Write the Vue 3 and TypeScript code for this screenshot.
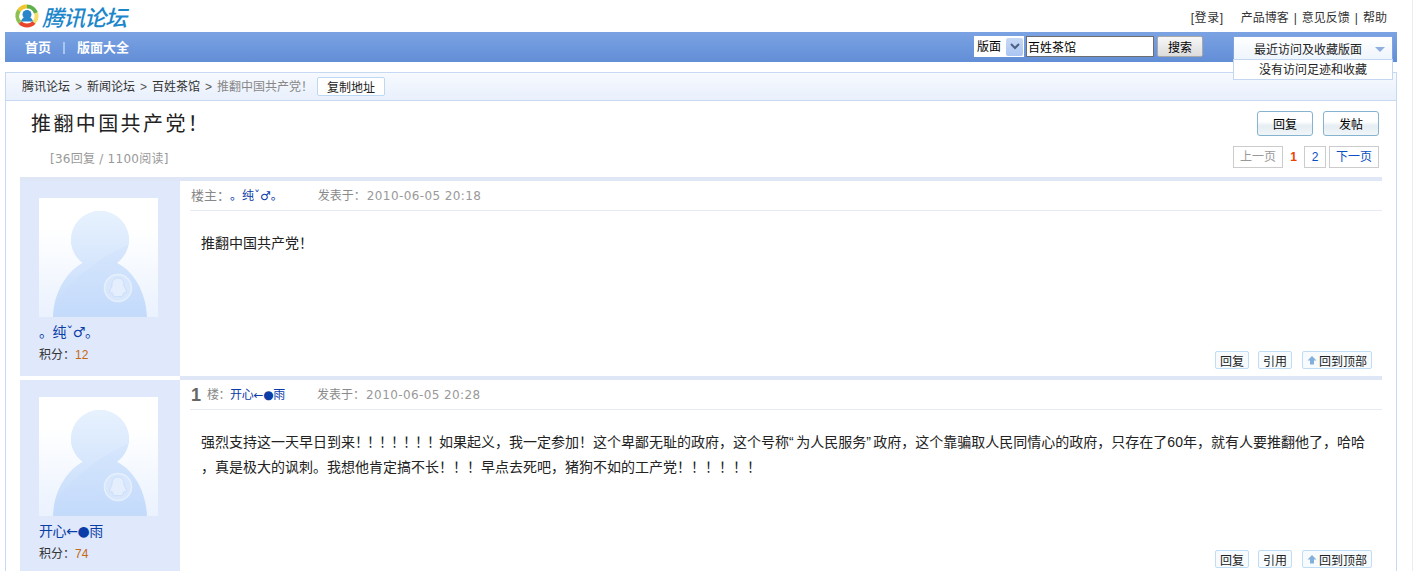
<script setup lang="ts">
import { ref } from 'vue'

interface Segment {
  text: string
  kind?: 'tight' | 'quote'
}

interface Post {
  floor: number
  author: string
  score: number
  time: string
  lines: Segment[][]
}

const board = ref('百姓茶馆')

const posts: Post[] = [
  {
    floor: 0,
    author: '。纯ˇ♂。',
    score: 12,
    time: '2010-06-05 20:18',
    lines: [[{ text: '推翻中国共产党！' }]]
  },
  {
    floor: 1,
    author: '开心←●雨',
    score: 74,
    time: '2010-06-05 20:28',
    lines: [
      [
        { text: '强烈支持这一天早日到来' },
        { text: '！！！！！！！', kind: 'tight' },
        { text: '如果起义，我一定参加！这个卑鄙无耻的政府，这个号称' },
        { text: '“', kind: 'quote' },
        { text: '为人民服务' },
        { text: '”', kind: 'quote' },
        { text: '政府，这个靠骗取人民同情心的政府，只存在了60年，就有人要推翻他了，哈哈' }
      ],
      [{ text: '，真是极大的讽刺。我想他肯定搞不长！！！早点去死吧，猪狗不如的工产党！！！！！！' }]
    ]
  }
]
</script>

<template>
  <div class="page">
    <header class="top">
      <a class="logo">
        <svg width="24" height="24" viewBox="0 0 24 24">
          <circle cx="12" cy="12" r="9.500" fill="#fff" />
          <path d="M4 6.500A9.500 9.500 0 0 1 12 2.500" fill="none" stroke="#f2c62e" stroke-width="4" />
          <path d="M12 2.500A9.500 9.500 0 0 1 21 9" fill="none" stroke="#5fb04a" stroke-width="4" />
          <path d="M21 9A9.500 9.500 0 0 1 19 18.500" fill="none" stroke="#f4df6a" stroke-width="4" />
          <path d="M19 18.500A9.500 9.500 0 0 1 5 18.500" fill="none" stroke="#e8452c" stroke-width="4" />
          <path d="M5 18.500A9.500 9.500 0 0 1 4 6.500" fill="none" stroke="#8cc152" stroke-width="4" />
          <circle cx="12" cy="10.500" r="4.500" fill="#2a86c8" />
          <path d="M6 17.500c1-3.500 3-4.500 6-4.500s5 1 6 4.500z" fill="#2a86c8" />
        </svg>
        <span class="logo-text">腾讯论坛</span>
      </a>
      <nav class="top-nav">
        <span class="login">[登录]</span>
        <span>产品博客</span><i>|</i><span>意见反馈</span><i>|</i><span>帮助</span>
      </nav>
    </header>

    <div class="bar">
      <div class="bar-links">
        <a>首页</a>
        <i></i>
        <a>版面大全</a>
      </div>
      <div class="search">
        <div class="select">
          <span>版面</span>
          <b>
            <svg width="10" height="7" viewBox="0 0 10 7"><path d="M1 1l4 4 4-4" fill="none" stroke="#4d6185" stroke-width="2" /></svg>
          </b>
        </div>
        <input v-model="board" class="keyword" type="text" />
        <button class="search-btn" type="button">搜索</button>
      </div>
    </div>

    <div class="recent">
      <div class="recent-head">
        <span>最近访问及收藏版面</span>
        <em></em>
      </div>
      <div class="recent-body">没有访问足迹和收藏</div>
    </div>

    <main class="box">
      <div class="crumbs">
        <span>腾讯论坛</span><u>&gt;</u><span>新闻论坛</span><u>&gt;</u><span>百姓茶馆</span><u>&gt;</u>
        <span class="current">推翻中国共产党！</span>
        <button class="copy" type="button">复制地址</button>
      </div>

      <div class="title-row">
        <h1>推翻中国共产党！</h1>
        <div class="actions">
          <button type="button">回复</button>
          <button type="button">发帖</button>
        </div>
      </div>

      <div class="meta-row">
        <span class="counts">[36回复 / 1100阅读]</span>
        <div class="pager">
          <span class="page-btn off">上一页</span>
          <span class="now">1</span>
          <span class="page-btn num">2</span>
          <span class="page-btn">下一页</span>
        </div>
      </div>

      <div class="posts">
        <article v-for="post in posts" :key="post.floor" class="post">
          <aside class="side">
            <svg class="avatar" width="120" height="120" viewBox="0 0 120 120">
              <defs>
                <linearGradient :id="`bg${post.floor}`" x1="0" y1="0" x2="0" y2="1">
                  <stop offset="0.25" stop-color="#ffffff" />
                  <stop offset="1" stop-color="#eaf2fe" />
                </linearGradient>
                <linearGradient :id="`fig${post.floor}`" x1="0" y1="0" x2="0" y2="1">
                  <stop offset="0.3" stop-color="#d9e8fd" />
                  <stop offset="1" stop-color="#c3dafb" />
                </linearGradient>
                <linearGradient :id="`hi${post.floor}`" x1="0" y1="0" x2="0" y2="1">
                  <stop offset="0.1" stop-color="#e8f2fe" />
                  <stop offset="0.9" stop-color="#c8ddfb" />
                </linearGradient>
                <clipPath :id="`clip${post.floor}`">
                  <path d="M14 119C15 92 30 72 44 65 36 59 32 50 32 42a29 29 0 0 1 58 0c0 8-4 17-12 23 15 7 29 27 30 54z" />
                </clipPath>
              </defs>
              <rect width="119" height="119" :fill="`url(#bg${post.floor})`" />
              <g :clip-path="`url(#clip${post.floor})`">
                <rect width="120" height="120" :fill="`url(#fig${post.floor})`" />
                <path d="M0 0h120v36C88 44 42 66 14 108L0 119z" :fill="`url(#hi${post.floor})`" />
              </g>
              <circle cx="79" cy="90" r="13.500" fill="#d8e7fc" stroke="#e6f0fd" stroke-width="1.500" />
              <path d="M79 80c-4.500 0-6 3.500-6 7 0 2-2.500 4.500-2.500 7 0 1.500 1 1.500 2.500.5 .2 1 .6 1.800 1.500 2.200-1 .8-.5 2 1 2h7c1.500 0 2-1.200 1-2 .9-.4 1.300-1.200 1.500-2.200 1.500 1 2.500 1 2.500-.5 0-2.500-2.500-5-2.500-7 0-3.500-1.500-7-6-7z" fill="#e4eefd" stroke="#c5d9f7" stroke-width="0.800" />
            </svg>
            <a class="author">{{ post.author }}</a>
            <div class="score">积分：<span>{{ post.score }}</span></div>
          </aside>

          <section class="content">
            <div class="post-head">
              <template v-if="post.floor === 0">
                <span class="role">楼主：</span><a class="name">{{ post.author }}</a>
              </template>
              <template v-else>
                <strong>{{ post.floor }}</strong>
                <span class="role small">楼：</span><a class="name small">{{ post.author }}</a>
              </template>
              <span class="time">发表于：<span class="stamp">{{ post.time }}</span></span>
            </div>
            <div class="post-body">
              <p v-for="(line, i) in post.lines" :key="i">
                <span v-for="seg in line" :key="seg.text" :class="seg.kind">{{ seg.text }}</span>
              </p>
            </div>
            <div class="post-foot">
              <button type="button">回复</button>
              <button type="button">引用</button>
              <button type="button" class="to-top">
                <svg width="10" height="10" viewBox="0 0 10 10"><path d="M5 1l4.500 4.500H7V9.500H3V5.500H.5z" fill="#82b0da" /></svg>
                回到顶部
              </button>
            </div>
          </section>
        </article>
      </div>
    </main>
  </div>
</template>

<style>
html,
body {
  margin: 0;
  height: 100%;
  overflow: hidden;
  background: #fff;
}

body {
  box-sizing: border-box;
  border-right: 1px solid #ececec;
}
</style>

<style scoped>
.page {
  position: relative;
  width: 1392px;
  margin-left: 5px;
  font: 12px/16px "Liberation Sans", "Noto Sans CJK SC", sans-serif;
  color: #222;
}

.top {
  display: flex;
  align-items: flex-start;
  justify-content: space-between;
  height: 32px;
}

.logo {
  display: flex;
  align-items: center;
  gap: 3px;
  margin: 3px 0 0 10px;
}

.logo-text {
  font: italic 500 22px/26px "Noto Sans CJK SC", sans-serif;
  letter-spacing: -1px;
  color: #1c86cb;
}

.top-nav {
  display: flex;
  gap: 5px;
  margin: 10px 10px 0 0;
  color: #333;
}

.top-nav i {
  font-style: normal;
}

.login {
  margin-right: 12px;
  letter-spacing: 0.6px;
}

.bar {
  display: flex;
  align-items: flex-start;
  justify-content: space-between;
  height: 30px;
  background: linear-gradient(#7ba3e3, #628ed7);
  box-sizing: border-box;
}

.bar-links {
  display: flex;
  align-items: center;
  height: 30px;
  padding: 1px 0 0 20px;
  box-sizing: border-box;
  color: #fff;
  font-size: 13px;
  font-weight: 700;
}

.bar-links i {
  width: 2px;
  height: 12px;
  margin: 0 12px;
  background: #a9c6f0;
}

.search {
  display: flex;
  align-items: center;
  margin: 4px 194px 0 0;
}

.select {
  display: flex;
  align-items: center;
  justify-content: space-between;
  width: 50px;
  height: 21px;
  margin-right: 2px;
  box-sizing: border-box;
  padding: 1px;
  background: #fff;
  color: #000;
  font-size: 12px;
}

.select span {
  padding-left: 2px;
}

.select b {
  display: flex;
  align-items: center;
  justify-content: center;
  width: 17px;
  height: 18px;
  border-radius: 2px;
  background: linear-gradient(#c8d9f6, #aac5f2);
}

.keyword {
  width: 128px;
  height: 21px;
  box-sizing: border-box;
  padding: 0 1px;
  border: 1px solid #6e6e6e;
  background: #fff;
  font: 12px "Liberation Sans", "Noto Sans CJK SC", sans-serif;
  color: #000;
  outline: none;
}

.search-btn {
  width: 46px;
  height: 21px;
  margin-left: 3px;
  padding: 0;
  border: 1px solid #a9a9a9;
  border-radius: 2px;
  background: linear-gradient(#f7f7f7, #dcdcdc);
  font: 12px "Liberation Sans", "Noto Sans CJK SC", sans-serif;
  color: #000;
}

.recent {
  position: absolute;
  top: 36px;
  left: 1228px;
  width: 160px;
  z-index: 2;
  font-size: 12px;
  color: #222;
}

.recent-head {
  display: flex;
  align-items: center;
  justify-content: space-between;
  height: 23px;
  box-sizing: border-box;
  padding: 3px 7px 0 20px;
  border: 1px solid #7ea3e0;
  border-bottom: 0;
  background: linear-gradient(#fff, #eef5fc);
}

.recent-head em {
  width: 0;
  height: 0;
  border: 5px solid transparent;
  border-top: 5px solid #8fb0df;
  border-bottom: 0;
}

.recent-body {
  height: 21px;
  box-sizing: border-box;
  padding-top: 2px;
  border: 1px solid #c4d6f0;
  background: #fff;
  text-align: center;
}

.box {
  margin-top: 10px;
  border: 1px solid #c7d9f2;
  border-bottom: 0;
}

.crumbs {
  display: flex;
  align-items: center;
  height: 27px;
  padding-left: 16px;
  border-bottom: 1px solid #c7d9f2;
  background: linear-gradient(#f6f9fe, #e9f0fc);
  color: #333;
}

.crumbs u {
  margin: 0 5px;
  text-decoration: none;
  color: #555;
}

.current {
  color: #888;
}

.copy {
  width: 68px;
  height: 19px;
  margin-left: 4px;
  padding: 0;
  border: 1px solid #bcd8f5;
  border-radius: 2px;
  background: #fff;
  font: 12px "Liberation Sans", "Noto Sans CJK SC", sans-serif;
  color: #222;
}

.title-row {
  display: flex;
  align-items: flex-start;
  justify-content: space-between;
  height: 42px;
  padding: 10px 17px 0 25px;
  box-sizing: border-box;
}

h1 {
  margin: 0;
  font-size: 20px;
  line-height: 26px;
  font-weight: 400;
  letter-spacing: 2.4px;
  color: #222;
}

.actions {
  display: flex;
  gap: 10px;
}

.actions button {
  width: 56px;
  height: 25px;
  padding: 0;
  border: 1px solid #86b3cf;
  border-radius: 3px;
  background: linear-gradient(#fff 40%, #e6eef3 60%, #f0f5f8);
  font: 12px "Liberation Sans", "Noto Sans CJK SC", sans-serif;
  color: #000;
}

.meta-row {
  display: flex;
  align-items: flex-start;
  justify-content: space-between;
  height: 34px;
  padding: 3px 17px 0 44px;
  box-sizing: border-box;
}

.counts {
  padding-top: 5px;
  font-family: "DejaVu Sans", "Noto Sans CJK SC", sans-serif;
  letter-spacing: 0.25px;
  color: #999;
}

.pager {
  display: flex;
  align-items: center;
  color: #0b4fc0;
}

.page-btn {
  display: block;
  width: 50px;
  height: 22px;
  box-sizing: border-box;
  border: 1px solid #ccc;
  line-height: 20px;
  text-align: center;
}

.page-btn.off {
  color: #999;
}

.page-btn.num {
  width: 22px;
  margin-right: 3px;
}

.now {
  width: 21px;
  text-align: center;
  color: #f04000;
  font-weight: 700;
}

.posts {
  margin: 0 14px;
}

.post {
  display: flex;
  height: 199px;
}

.side {
  width: 160px;
  height: 199px;
  padding: 17px 0 0 19px;
  box-sizing: border-box;
  border-top: 4px solid #dfe7f7;
  background: #e0e9fb;
  flex-shrink: 0;
}

.post + .post .side {
  border-top-color: #fff;
}

.avatar {
  display: block;
}

.author {
  display: block;
  margin-top: 5px;
  font-family: "DejaVu Sans", "Noto Sans CJK SC", sans-serif;
  font-size: 14px;
  line-height: 18px;
  letter-spacing: -0.4px;
  color: #0b3da8;
}

.score {
  margin-top: 6px;
  color: #333;
}

.score span {
  color: #c46a12;
}

.content {
  flex: 1;
  min-width: 0;
  display: flex;
  flex-direction: column;
  height: 199px;
  padding: 0 0 0 10px;
  box-sizing: border-box;
  border-top: 4px solid #dfe7f7;
}

.post-head {
  display: flex;
  align-items: center;
  height: 29px;
  padding-left: 1px;
  border-bottom: 1px solid #e4eaf6;
  color: #888;
}

.post-head strong {
  margin-right: 6px;
  font: 700 18px/22px "Liberation Sans", sans-serif;
  color: #666;
}

.role {
  font-size: 13px;
}

.role.small {
  font-size: 12px;
  letter-spacing: -0.5px;
}

.name {
  font-family: "DejaVu Sans", "Noto Sans CJK SC", sans-serif;
  font-size: 12px;
  color: #0b3da8;
}

.name.small {
  margin-right: -3px;
  letter-spacing: -0.3px;
}

.time {
  margin-left: 35px;
  color: #8a8a8a;
}

.stamp {
  margin-left: 1px;
  font-family: "DejaVu Sans", sans-serif;
  letter-spacing: 0.4px;
  color: #999;
}

.post-body {
  flex: 1;
  padding: 20px 11px 0 11px;
}

.post-body p {
  margin: 0;
  font-size: 14px;
  line-height: 25px;
  white-space: nowrap;
  color: #222;
}

.tight {
  letter-spacing: -2px;
}

.quote {
  letter-spacing: 2.5px;
}

.post-foot {
  display: flex;
  justify-content: flex-end;
  gap: 9px;
  padding: 0 10px 7px 0;
}

.post-foot button {
  display: flex;
  align-items: center;
  justify-content: center;
  gap: 2px;
  width: 34px;
  height: 18px;
  padding: 0;
  border: 1px solid #c0ddf6;
  border-radius: 2px;
  background: #f7fbfe;
  font: 12px "Liberation Sans", "Noto Sans CJK SC", sans-serif;
  color: #222;
}

.post-foot .to-top {
  width: 70px;
  margin-left: 1px;
}
</style>
